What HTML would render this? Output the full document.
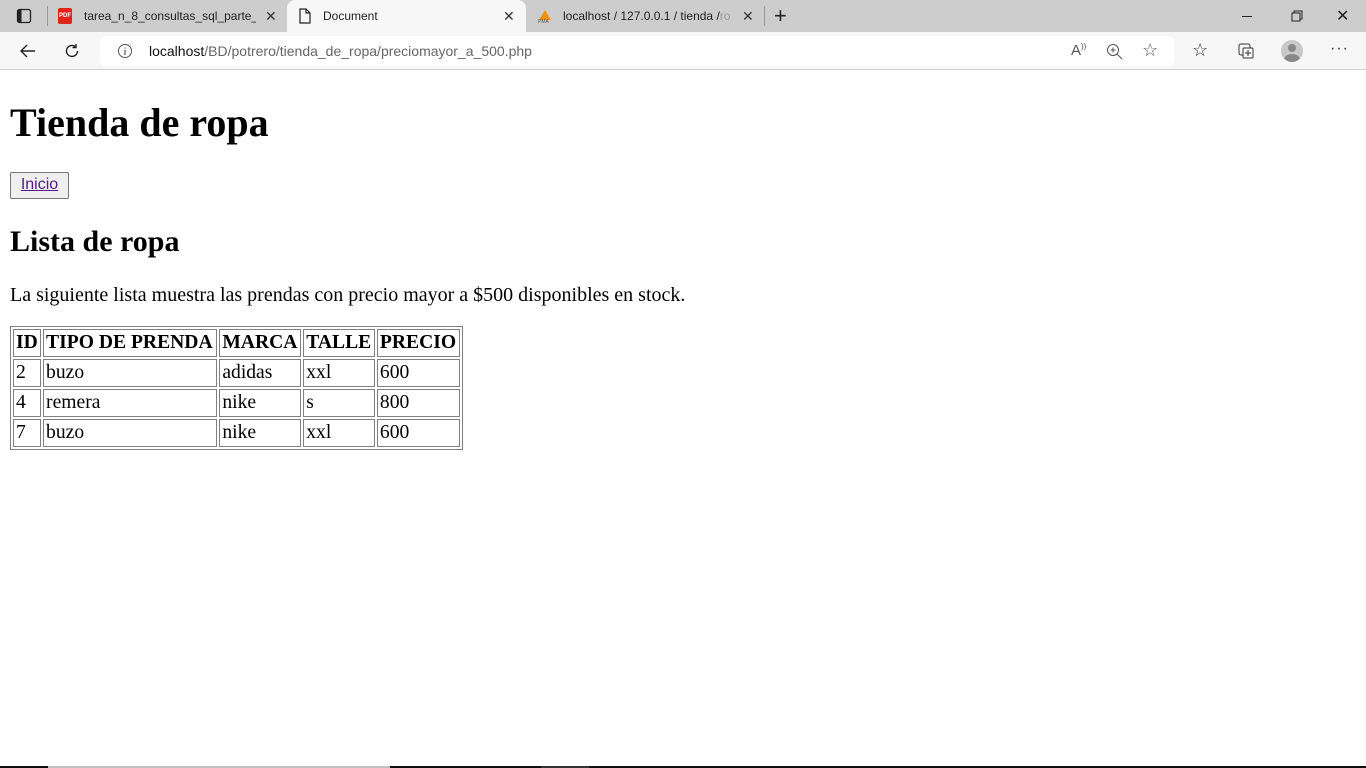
<!DOCTYPE html>
<html><head><meta charset="utf-8">
<style>
*{margin:0;padding:0;box-sizing:border-box}
body{width:1366px;height:768px;overflow:hidden;background:#fff;position:relative;font-family:"Liberation Serif",serif;}
.abs{position:absolute}
.ui{font-family:"Liberation Sans",sans-serif;}
#tabbar{left:0;top:0;width:1366px;height:32px;background:#cdcdcd}
#toolbar{left:0;top:32px;width:1366px;height:38px;background:#f7f7f7;border-bottom:1px solid #d0d0d0}
.tab{top:0;height:32px;font-size:12px;color:#222;display:flex;align-items:center;overflow:hidden;white-space:nowrap}
#active{left:287px;width:239px;top:0;height:32px;background:#f7f7f7;border-radius:8px 8px 0 0}
#addr{left:100px;top:36px;width:1074px;height:30px;background:#fff;border-radius:6px}
.x{font-size:14px;color:#333}
table{border:1px solid #808080;border-spacing:2px;font-size:19.6px;line-height:24px}
td,th{border:1px solid #808080;padding:1px 2px;height:28px;text-align:left;white-space:nowrap}
</style></head><body>
<div id="tabbar" class="abs ui"></div>
<div id="active" class="abs"></div>
<svg class="abs" style="left:16px;top:8px" width="16" height="16" viewBox="0 0 16 16"><rect x="1.5" y="1.5" width="13" height="13" rx="2" fill="none" stroke="#222" stroke-width="1.3"/><rect x="1.5" y="1.5" width="4" height="13" fill="#222"/></svg>
<div class="abs" style="left:47px;top:6px;width:1px;height:20px;background:#999"></div>
<div class="abs" style="left:58px;top:8px;width:14px;height:16px;background:#e2231a;border-radius:2px;color:#fff;font:bold 6px 'Liberation Sans';text-align:center;line-height:16px">PDF</div>
<div class="abs tab ui" style="left:84px;width:172px">tarea_n_8_consultas_sql_parte_1_</div>
<div class="abs ui x" style="left:265px;top:8px">✕</div>
<svg class="abs" style="left:298px;top:8px" width="14" height="16" viewBox="0 0 14 16"><path d="M2 1h6l4 4v10H2z M8 1v4h4" fill="none" stroke="#222" stroke-width="1.2"/></svg>
<div class="abs tab ui" style="left:323px">Document</div>
<div class="abs ui x" style="left:503px;top:8px">✕</div>
<svg class="abs" style="left:536px;top:8px" width="18" height="16" viewBox="0 0 18 16"><path d="M3 12L9 2l6 10z" fill="#f29111"/><text x="2" y="15" font-size="5" fill="#555" font-family="Liberation Sans">PMA</text></svg>
<div class="abs tab ui" style="left:563px;width:173px;color:#222">localhost / 127.0.0.1 / tienda / <span style="color:#999">ro</span></div>
<div class="abs ui x" style="left:742px;top:8px">✕</div>
<div class="abs" style="left:764px;top:6px;width:1px;height:20px;background:#999"></div>
<div class="abs ui" style="left:774px;top:3px;font-size:22px;color:#222;font-weight:300">+</div>
<div class="abs" style="left:1242px;top:16px;width:10px;height:1px;background:#222"></div>
<svg class="abs" style="left:1291px;top:10px" width="12" height="12"><rect x="1" y="3" width="8" height="8" fill="none" stroke="#222"/><path d="M3 3V1h8v8H9" fill="none" stroke="#222"/></svg>
<div class="abs ui" style="left:1336px;top:6px;font-size:16px;color:#222">✕</div>

<div id="toolbar" class="abs"></div>
<div id="addr" class="abs"></div>
<svg class="abs" style="left:18px;top:42px" width="20" height="18"><path d="M17 9H3M9 3L3 9l6 6" fill="none" stroke="#222" stroke-width="1.4"/></svg>
<svg class="abs" style="left:63px;top:42px" width="18" height="18"><path d="M14.5 9a5.5 5.5 0 1 1-2-4.3M13 2v3.5H9.5" fill="none" stroke="#222" stroke-width="1.4"/></svg>
<svg class="abs" style="left:117px;top:43px" width="16" height="16"><circle cx="8" cy="8" r="6.5" fill="none" stroke="#555"/><path d="M8 7v5M8 4.5v1" stroke="#555" stroke-width="1.2"/></svg>
<div class="abs ui" style="left:149px;top:43px;font-size:14px;color:#666"><span style="color:#111">localhost</span>/BD/potrero/tienda_de_ropa/preciomayor_a_500.php</div>
<div class="abs ui" style="left:1071px;top:42px;font-size:15px;color:#555">A<sup style="font-size:8px">))</sup></div>
<svg class="abs" style="left:1106px;top:43px" width="18" height="18"><circle cx="7" cy="7" r="5.5" fill="none" stroke="#555"/><path d="M11 11l5 5M4.5 7h5M7 4.5v5" stroke="#555"/></svg>
<div class="abs ui" style="left:1142px;top:40px;font-size:18px;color:#555">☆</div>
<div class="abs ui" style="left:1192px;top:40px;font-size:18px;color:#333">☆</div>
<svg class="abs" style="left:1237px;top:42px" width="18" height="18"><rect x="2" y="2" width="11" height="11" rx="2" fill="none" stroke="#333"/><rect x="6" y="6" width="10" height="10" rx="1" fill="#f7f7f7" stroke="#333"/><path d="M11 8v6M8 11h6" stroke="#333"/></svg>
<div class="abs" style="left:1281px;top:40px;width:22px;height:22px;border-radius:50%;background:#c8c8c8;overflow:hidden"><div style="position:absolute;left:7px;top:4px;width:8px;height:8px;border-radius:50%;background:#888"></div><div style="position:absolute;left:3px;top:14px;width:16px;height:12px;border-radius:50%;background:#888"></div></div>
<div class="abs ui" style="left:1330px;top:40px;font-size:16px;color:#333;letter-spacing:1px">···</div>

<div class="abs" style="left:10px;top:100px;font-size:40px;font-weight:bold;line-height:46px">Tienda de ropa</div>
<div class="abs ui" style="left:10px;top:172px;width:59px;height:27px;background:#efefef;border:1px solid #767676;border-radius:2px;font-size:16px;text-align:center;line-height:24px"><span style="color:#551a8b;text-decoration:underline">Inicio</span></div>
<div class="abs" style="left:10px;top:225px;font-size:30px;font-weight:bold;line-height:34px">Lista de ropa</div>
<div class="abs" style="left:10px;top:283px;font-size:20px;line-height:24px">La siguiente lista muestra las prendas con precio mayor a $500 disponibles en stock.</div>
<table class="abs" style="left:10px;top:326px;width:453px">
<tr><th>ID</th><th>TIPO DE PRENDA</th><th>MARCA</th><th>TALLE</th><th>PRECIO</th></tr>
<tr><td>2</td><td>buzo</td><td>adidas</td><td>xxl</td><td>600</td></tr>
<tr><td>4</td><td>remera</td><td>nike</td><td>s</td><td>800</td></tr>
<tr><td>7</td><td>buzo</td><td>nike</td><td>xxl</td><td>600</td></tr>
</table>
<div class="abs" style="left:0;top:766px;width:1366px;height:2px;background:#111"></div>
<div class="abs" style="left:48px;top:766px;width:342px;height:2px;background:#c0c0c0"></div>
<div class="abs" style="left:541px;top:766px;width:48px;height:2px;background:#333"></div>
</body></html>
